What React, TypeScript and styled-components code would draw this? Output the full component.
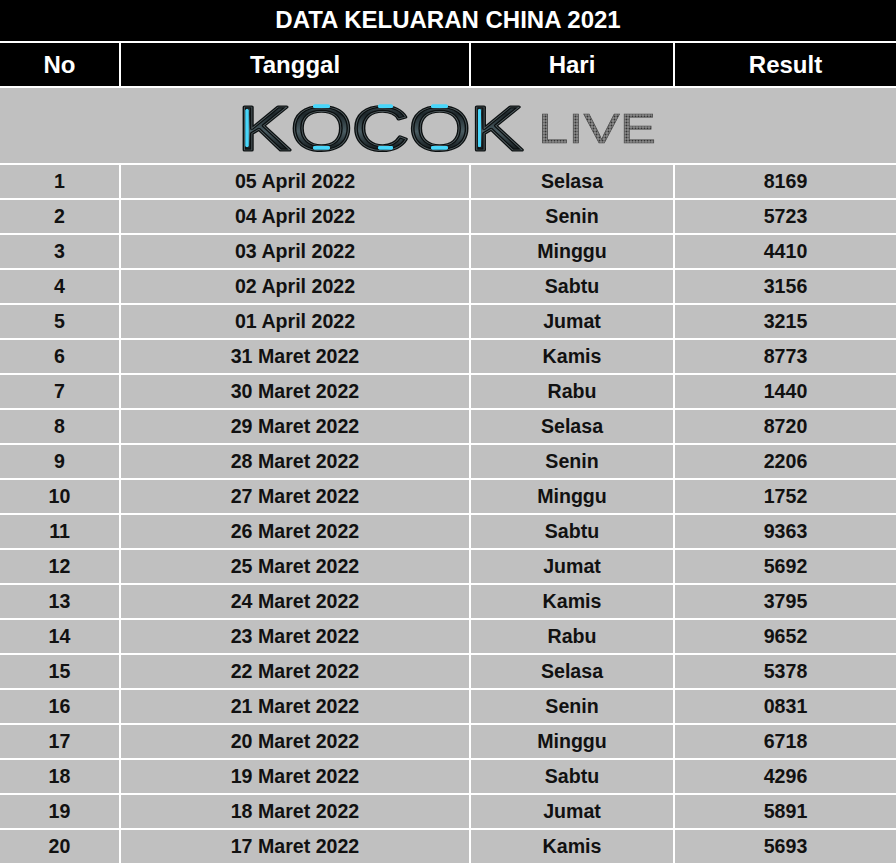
import React from "react";
import styled, { createGlobalStyle } from "styled-components";

const GlobalStyle = createGlobalStyle`
  html, body {
    margin: 0;
    padding: 0;
    background: #ffffff;
  }
  body {
    font-family: "Liberation Sans", Arial, sans-serif;
  }
`;

const rows = [
  ["1", "05 April 2022", "Selasa", "8169"],
  ["2", "04 April 2022", "Senin", "5723"],
  ["3", "03 April 2022", "Minggu", "4410"],
  ["4", "02 April 2022", "Sabtu", "3156"],
  ["5", "01 April 2022", "Jumat", "3215"],
  ["6", "31 Maret 2022", "Kamis", "8773"],
  ["7", "30 Maret 2022", "Rabu", "1440"],
  ["8", "29 Maret 2022", "Selasa", "8720"],
  ["9", "28 Maret 2022", "Senin", "2206"],
  ["10", "27 Maret 2022", "Minggu", "1752"],
  ["11", "26 Maret 2022", "Sabtu", "9363"],
  ["12", "25 Maret 2022", "Jumat", "5692"],
  ["13", "24 Maret 2022", "Kamis", "3795"],
  ["14", "23 Maret 2022", "Rabu", "9652"],
  ["15", "22 Maret 2022", "Selasa", "5378"],
  ["16", "21 Maret 2022", "Senin", "0831"],
  ["17", "20 Maret 2022", "Minggu", "6718"],
  ["18", "19 Maret 2022", "Sabtu", "4296"],
  ["19", "18 Maret 2022", "Jumat", "5891"],
  ["20", "17 Maret 2022", "Kamis", "5693"],
];

const Table = styled.div`
  display: grid;
  grid-template-columns: 119px 348px 202px 221px;
  gap: 2px;
  background: #ffffff;
  width: 896px;
`;

const Title = styled.div`
  grid-column: 1 / -1;
  height: 41px;
  padding-bottom: 2px;
  box-sizing: border-box;
  background: #000;
  color: #fff;
  font-size: 24px;
  font-weight: 700;
  display: flex;
  align-items: center;
  justify-content: center;
`;

const HeadCell = styled.div`
  height: 43px;
  background: #000;
  color: #fff;
  font-size: 24px;
  font-weight: 700;
  display: flex;
  align-items: center;
  justify-content: center;
`;

const LogoRow = styled.div`
  grid-column: 1 / -1;
  height: 75px;
  background: #c0c0c0;
  display: flex;
  justify-content: center;
`;

const Cell = styled.div`
  height: 33px;
  background: #c0c0c0;
  color: #111;
  font-size: 19.6px;
  font-weight: 700;
  display: flex;
  align-items: center;
  justify-content: center;
`;

const logoFont = "'Liberation Sans', Arial, sans-serif";

const Logo = () => (
  <svg width="420" height="75" viewBox="0 0 420 75">
    <defs>
      <linearGradient id="metal" x1="0" y1="0" x2="0" y2="1">
        <stop offset="0" stopColor="#66787e" />
        <stop offset="0.3" stopColor="#1d272b" />
        <stop offset="0.55" stopColor="#4a5c62" />
        <stop offset="0.8" stopColor="#151c1f" />
        <stop offset="1" stopColor="#3a474c" />
      </linearGradient>
      <pattern id="dots" width="3" height="3" patternUnits="userSpaceOnUse">
        <rect width="3" height="3" fill="#8c8c8c" />
        <circle cx="1.5" cy="1.5" r="1" fill="#343434" />
      </pattern>
      <filter id="glow" x="-50%" y="-50%" width="200%" height="200%">
        <feGaussianBlur stdDeviation="0.6" result="b" />
        <feMerge>
          <feMergeNode in="b" />
          <feMergeNode in="SourceGraphic" />
        </feMerge>
      </filter>
    </defs>
    <text
      x="0"
      y="62"
      fontFamily={logoFont}
      fontWeight="400"
      fontSize="63"
      textLength="285"
      lengthAdjust="spacingAndGlyphs"
      fill="url(#metal)"
      stroke="#0b0f10"
      strokeWidth="3"
      strokeLinejoin="round"
    >
      KOCOK
    </text>
    <text
      x="0"
      y="62"
      fontFamily={logoFont}
      fontWeight="400"
      fontSize="63"
      textLength="285"
      lengthAdjust="spacingAndGlyphs"
      fill="none"
      stroke="#8fa3a8"
      strokeOpacity="0.55"
      strokeWidth="0.7"
    >
      KOCOK
    </text>
    <g fill="#48d6fa" filter="url(#glow)">
      <rect x="7.5" y="21" width="3" height="38" rx="1.5" />
      <rect x="75" y="16.5" width="17" height="3.5" rx="1.7" />
      <rect x="75" y="58" width="17" height="3.5" rx="1.7" />
      <rect x="140" y="16.5" width="15" height="3.5" rx="1.7" />
      <rect x="140" y="58" width="15" height="3.5" rx="1.7" />
      <rect x="193" y="16.5" width="17" height="3.5" rx="1.7" />
      <rect x="193" y="58" width="17" height="3.5" rx="1.7" />
      <rect x="240" y="21" width="3" height="38" rx="1.5" />
    </g>
    <text
      x="300"
      y="55"
      fontFamily={logoFont}
      fontWeight="400"
      fontSize="43"
      textLength="118"
      lengthAdjust="spacingAndGlyphs"
      fill="url(#dots)"
      stroke="#4a4a4a"
      strokeWidth="0.6"
    >
      LIVE
    </text>
  </svg>
);

const App = () => {
  return (
    <>
      <GlobalStyle />
      <Table>
        <Title>DATA KELUARAN CHINA 2021</Title>
        <HeadCell>No</HeadCell>
        <HeadCell>Tanggal</HeadCell>
        <HeadCell>Hari</HeadCell>
        <HeadCell>Result</HeadCell>
        <LogoRow>
          <Logo />
        </LogoRow>
        {rows.map((r) => (
          <React.Fragment key={r[0]}>
            {r.map((v, i) => (
              <Cell key={i}>{v}</Cell>
            ))}
          </React.Fragment>
        ))}
      </Table>
    </>
  );
};

export default App;
